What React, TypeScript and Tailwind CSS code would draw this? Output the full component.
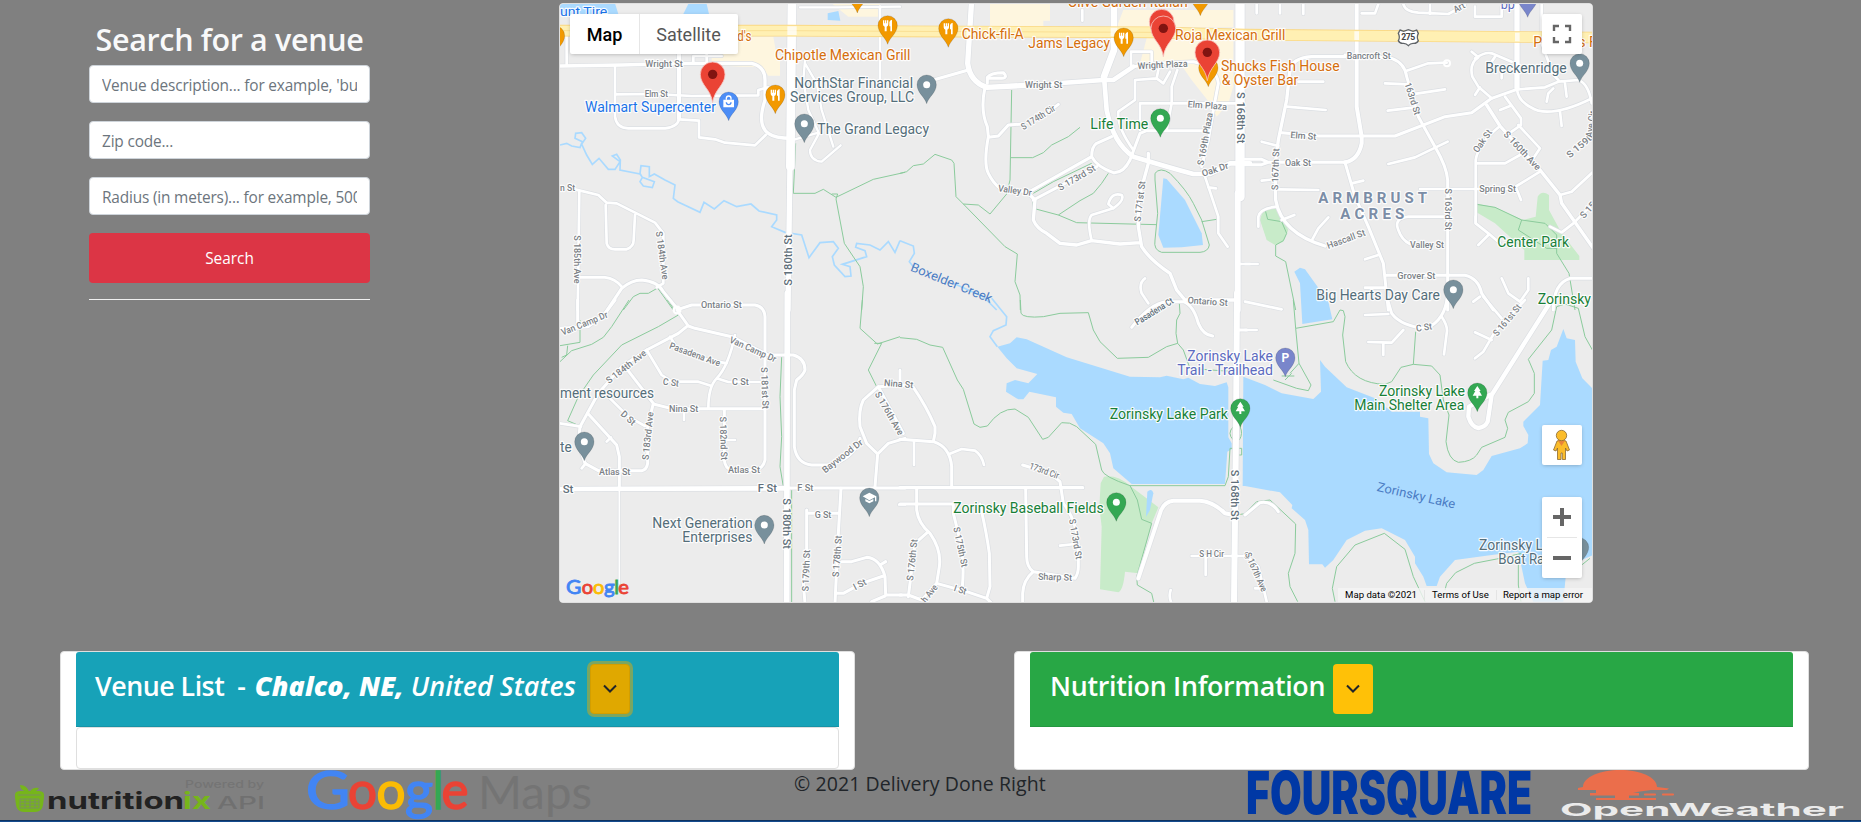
import React from "react";

type Shape = string[];
type Road = [number, string];
type Label = [x: number, y: number, size: number, kind: string, length: number, text: string, rotate?: number];
type Pin = [x: number, y: number, kind: string, glyph?: string];
interface Tile {
  x: number;
  y: number;
  shops?: Shape;
  parks?: Shape;
  water?: Shape;
  creeks?: Shape;
  roads: Road[];
  trails: Shape;
  labels: Label[];
  pins: Pin[];
}

const COLORS: Record<string, string> = {
  road: "#7b8186",
  major: "#5f6f7a",
  food: "#d56e0c",
  place: "#546e7a",
  shop: "#1a73e8",
  park: "#188038",
  area: "#7b8da6",
  trail: "#5c6bc0",
  water: "#4a7cc4",
};
const PIN_COLORS: Record<string, string> = {
  food: "#f29900",
  place: "#78909c",
  shop: "#4c8df6",
  park: "#34a853",
  trail: "#7986cb",
};

const TILES: Tile[] = [
  {
    x: 0,
    y: 0,
    shops: ["M480 110H655L662 150L675 165V227H640L620 200L560 200L470 195V160Z", "M830 10H975V50H880Z"],
    water: ["M15 10H180L190 42H15Z", "M400 12H455L462 42H385Z", "M818 40L850 33L856 62L818 60Z"],
    creeks: [
      "M15 435L35 430L50 438L75 443L82 425L60 415L62 400L80 398L92 415L80 432L95 465L112 493L132 475L160 508L180 508L195 485L172 468L185 463L196 480L195 510L255 522L262 532L255 545L265 558L292 563L298 545L262 532L255 520L258 497L283 500V530L298 522L330 540L360 555L355 595L368 605L435 637L447 607L478 627L507 602L545 620L588 612L612 633L665 645V660L650 680L690 697L740 705L762 773L795 728L835 725L850 745L832 770L838 795L870 830L888 828L885 800L862 793L935 770L930 752L902 742L905 730L945 735L975 750L1000 725L1020 757L1035 722",
    ],
    roads: [
      [10, "M15 198L200 195L370 190H590Q630 200 630 240V300Q605 375 640 400Q660 415 710 415"],
      [8, "M35 110V195M180 200V350Q185 385 220 385H330Q370 380 372 355M180 283L300 282L410 288L610 286V270L640 262"],
      [12, "M372 160V355"],
      [8, "M372 358L432 362V412L480 418L510 428L600 436L632 405M415 185V168H500M455 160V185"],
      [7, "M720 418L790 398M750 180L745 240L760 330L792 400L765 450Q765 482 800 485L857 436M750 190L785 250L800 330L835 440M735 22H850L1035 20"],
      [8, "M975 20V240"],
      [26, "M711 0L706 500"],
      [16, "M705 480L699 930"],
      [8, "M60 568L130 585L155 608L185 610L300 668L325 700V850L305 862M152 615L155 730Q160 748 180 748H215Q236 740 236 720L240 645M73 575L68 930M68 832H150Q180 835 200 860"],
      [9, "M150 940L200 865Q230 840 260 840Q310 845 325 875L370 930"],
    ],
    trails: [
      "M205 930L235 890L255 880H280L308 864L355 930",
      "M722 430L715 580H780L805 568L843 592L955 538L1050 517M830 582H848L843 597L868 730L915 800L925 860L920 930",
    ],
    labels: [
      [15, 48, 40, "shop", 142, "unt Tire"],
      [547, 122, 42, "food", 42, "d's"],
      [660, 181, 42, "food", 406, "Chipotle Mexican Grill"],
      [718, 264, 42, "place", 356, "NorthStar Financial"],
      [705, 307, 42, "place", 372, "Services Group, LLC"],
      [787, 402, 42, "place", 335, "The Grand Legacy"],
      [90, 336, 42, "shop", 393, "Walmart Supercenter"],
      [271, 202, 28, "road", 112, "Wright St"],
      [269, 291, 28, "road", 70, "Elm St"],
      [15, 572, 28, "road", 45, "n St"],
      [68, 778, 28, "road", 145, "S 185th Ave", 90],
      [322, 766, 28, "road", 145, "S 184th Ave", 82],
      [701, 780, 32, "major", 154, "S 180th St", -90],
    ],
    pins: [
      [0, 107, "food"],
      [998, 76, "food", "fork"],
      [661, 284, "food", "fork"],
      [748, 371, "place", "dot"],
      [521, 305, "shop", "bag"],
      [907, -18, "food"],
    ],
  },
  {
    x: 1035,
    y: 0,
    shops: ["M270 10H450V62H430V80H270Z", "M670 30H1000V82H650Z", "M740 115H1000V260L985 310L950 350L930 310L875 240L840 190H720Z"],
    water: ["M790 535L800 537L855 600L880 650L905 700L909 735L845 742L790 743L775 705Z"],
    creeks: ["M0 722L40 738L43 760L28 785L40 800", "M160 850L250 890L290 930"],
    roads: [
      [16, "M215 0L203 190Q210 245 260 262L400 255"],
      [14, "M400 255L610 240L640 240L700 200"],
      [9, "M700 200L760 190L880 185Q950 200 955 250L940 330L925 420L905 500"],
      [20, "M642 0V150L612 230"],
      [14, "M612 230L620 330Q640 430 700 470Q800 500 880 522H930L990 490H1050"],
      [9, "M100 240L205 210M262 250V232Q272 218 310 218Q325 233 305 235H265M255 262Q240 330 262 380L265 410Q250 490 265 520Q280 550 300 565M265 412L295 408L325 375L370 372M420 355L475 313"],
      [9, "M635 410L590 430Q575 440 575 470L385 577M575 470Q590 500 640 518Q670 520 690 480L720 400L740 392H915M400 600L590 500"],
      [10, "M300 565L380 575L405 600L400 660Q410 685 440 700L480 730L530 735L575 722L660 732L720 728M745 460V490L715 600V680L725 740Q750 780 810 820L830 870L855 900H1010"],
      [8, "M575 722Q560 660 575 645L640 625Q675 600 665 585Q635 575 625 612L640 625M655 335L705 300V240L770 235L775 210M655 335Q650 380 700 450M720 390V310H1010M693 195V155H755V185M832 210L815 260V310L800 390M770 235L790 250L810 215M915 530L955 650V700L983 740M925 562L948 565M735 835Q715 850 725 880L745 910M547 30V62"],
      [28, "M1020 0V590"],
      [18, "M1013 580V930"],
      [8, "M1020 792H1050"],
    ],
    trails: [
      "M0 520L20 515L40 497L70 492L105 463L155 480L162 490L168 590L190 612L315 740L352 762L345 845L360 885L361 930",
      "M190 612L235 615L270 642L320 582L330 540L335 270",
      "M332 473H398L430 458L455 435L505 410L540 382",
      "M398 590L400 625L475 645L530 668L770 674M475 645L540 602L580 580L605 550L625 520",
      "M400 580L460 545L575 490",
      "M765 520Q780 500 810 520Q860 570 880 610L905 660L928 735Q925 755 900 757H785Q760 750 765 720L773 640L765 540ZM905 665L950 658",
    ],
    labels: [
      [185, 118, 42, "food", 186, "Chick-fil-A"],
      [385, 145, 42, "food", 245, "Jams Legacy"],
      [503, 20, 42, "food", 360, "Olive Garden Italian"],
      [825, 121, 42, "food", 331, "Roja Mexican Grill"],
      [963, 213, 42, "food", 356, "Shucks Fish House"],
      [965, 256, 42, "food", 230, "& Oyster Bar"],
      [571, 387, 42, "park", 174, "Life Time"],
      [375, 264, 28, "road", 112, "Wright St"],
      [788, 194, 28, "road", 150, "Wright Plaza", -3],
      [414, 352, 28, "road", 115, "S 174th Cir", -32],
      [922, 316, 28, "road", 118, "Elm Plaza", 4],
      [915, 417, 28, "road", 160, "S 169th Plaza", -80],
      [945, 508, 28, "road", 82, "Oak Dr", -18],
      [345, 571, 28, "road", 102, "Valley Dr", 8],
      [530, 533, 28, "road", 125, "S 173rd St", -30],
      [719, 604, 28, "road", 122, "S 171st St", -83],
      [1021, 353, 32, "major", 154, "S 168th St", 90],
      [155, 848, 38, "water", 260, "Boxelder Creek", 22],
      [923, 904, 28, "road", 120, "Ontario St", 4],
    ],
    pins: [
      [145, 85, "food", "fork"],
      [671, 113, "food", "fork"],
      [901, -10, "food"],
      [781, 355, "park", "dot"],
      [925, 203, "food"],
      [80, 254, "place", "dot"],
    ],
  },
  {
    x: 2070,
    y: 0,
    parks: [
      "M690 610L750 622L835 660L872 650L878 590Q890 570 912 585V630L950 700L1003 768V780H838V750L750 670L692 635Z",
      "M55 628L95 618L130 690L115 725L90 735L65 720L45 660Z",
    ],
    water: ["M148 815L165 803L180 808L250 905L262 958L172 972L165 850Z"],
    roads: [
      [12, "M335 0V320L350 410V430Q340 480 300 487"],
      [9, "M300 487H60M0 478H50L70 487L50 494H0"],
      [16, "M816 0V262"],
      [10, "M300 170H200Q140 175 135 210L125 300L100 420L90 500L92 600Q110 700 240 738"],
      [9, "M300 165L440 175Q480 190 485 230L520 350L570 440Q605 500 608 540V930"],
      [8, "M485 212L550 190L605 188M420 250L490 253M500 283L600 268M428 332L510 322M160 245H235M125 320L242 330M430 492L510 472L608 425M50 425L100 438M50 542L85 538M100 568L220 570M525 567H700M320 550L355 542M360 778L400 765M0 792H38M200 722L220 685L250 652M110 660L148 645M40 680V650Q45 625 95 620M605 650H490Q445 655 460 690Q470 720 495 732M360 863H420"],
      [9, "M110 398L220 408H450L600 350L680 338L740 295L816 268M300 487L330 590L370 680L415 790L430 930M425 826H660Q700 835 710 880L745 930M925 930Q925 850 975 835H1040"],
      [8, "M685 905L705 890M770 835L790 880L825 905L850 870V835M692 670V480Q700 430 765 378M692 490H780L825 465M700 567H800L885 515M812 560L828 600M780 290L828 355V375L800 395M820 375L885 445L865 475M765 330L795 318"],
      [10, "M725 315L765 378L885 510L945 585L950 610L1045 745"],
      [8, "M680 155L700 172Q672 190 682 230L700 260L740 295M690 175Q720 155 740 160L800 185M740 185L750 170M770 235V200M690 285L705 262M816 268Q820 310 880 332Q940 345 1040 295M820 268L900 262L940 245L1000 240Q1030 250 1040 310M905 305L910 280L925 265M965 290L960 250M945 335L950 378M890 12V130L925 225L940 240M945 585L980 575L1045 515M915 680L950 697L985 670L1045 610M692 650V670L730 700L765 730M700 735L730 705"],
      [8, "M475 12Q480 35 520 38L610 42L660 15M350 40H390L400 12M690 20V50H770V20M35 12V40M105 12V40M175 12V42M555 12V42"],
    ],
    trails: [
      "M60 628L68 658L110 665L125 700L115 722L92 735V768L122 785L152 930",
      "M695 613L750 622L830 660L900 670L935 705V760L972 820L990 930M830 660L820 690L905 745H935",
      "M95 620L115 665",
    ],
    labels: [
      [305, 178, 28, "road", 132, "Bancroft St"],
      [503, 296, 28, "road", 100, "163rd St", 72],
      [175, 407, 28, "road", 78, "Elm St", 4],
      [120, 497, 28, "road", 78, "Oak St"],
      [91, 508, 28, "road", 125, "S 167th St", -88],
      [712, 423, 28, "road", 76, "Oak St", -55],
      [832, 452, 28, "road", 148, "S 160th Ave", 47],
      [1008, 434, 28, "road", 105, "S 159th", -40],
      [1037, 372, 28, "road", 80, "Ave Cir", -82],
      [703, 576, 28, "road", 110, "Spring St"],
      [610, 628, 28, "road", 125, "S 163rd St", 90],
      [1028, 630, 28, "road", 55, "S 15", -48],
      [303, 717, 28, "road", 120, "Hascall St", -20],
      [495, 744, 28, "road", 102, "Valley St"],
      [457, 836, 28, "road", 114, "Grover St"],
      [220, 610, 45, "area", 326, "ARMBRUST"],
      [286, 656, 45, "area", 192, "ACRES"],
      [721, 220, 42, "place", 244, "Breckenridge"],
      [767, 26, 42, "trail", 42, "bp"],
      [865, 140, 42, "food", 190, "Panera's F"],
      [757, 741, 42, "park", 215, "Center Park"],
      [214, 901, 42, "place", 371, "Big Hearts Day Care"],
      [878, 912, 42, "park", 160, "Zorinsky"],
      [642, 22, 28, "road", 35, "Art", -28],
    ],
    pins: [
      [848, -5, "trail"],
      [1004, 190, "place", "dot"],
      [625, 869, "place", "dot"],
    ],
  },
  {
    x: 0,
    y: 900,
    roads: [
      [9, "M15 85L100 80L150 40L180 0M68 0V85M366 30L400 78L420 85L530 110L640 165H715Q750 175 750 210Q745 225 725 240L718 270V440Q725 490 770 495H830Q900 470 915 415"],
      [9, "M395 80L370 100L275 150L200 200L130 280L75 380L70 430L90 490L130 512H260Q275 510 278 490V380L295 310L210 200"],
      [8, "M345 110L370 150L440 175L515 190M275 150L320 225L350 245H430L470 258M540 105Q520 200 485 235Q460 260 460 325M485 235L520 246H625"],
      [9, "M370 28L410 15H600Q628 20 630 50V480Q625 505 600 510H530Q510 505 508 480V330M295 312L350 326H630M98 340L185 435L193 470V560"],
      [8, "M0 368L78 380M165 295L220 350L270 378M387 340V360M505 420H540M155 425L168 412M80 505L92 490"],
      [5, "M193 570V850"],
      [14, "M0 567L690 565"],
      [9, "M690 564H1050"],
      [9, "M755 630V770L745 850L750 910M755 640H850M858 565L850 700L840 910M860 785H890L935 772Q975 775 990 830L992 885H1040M975 795L992 785M845 880H865L920 850L985 828M950 905L990 888"],
      [9, "M1050 255L970 260L925 300Q910 330 915 380L935 430L968 462L1000 430L1050 415M968 462L960 560M970 260L1045 400"],
      [7, "M1035 210V250M1032 614H1050"],
      [17, "M697 -20L695 910"],
    ],
    trails: [
      "M222 0L170 80L145 112L110 133L50 152L15 185M75 60V127L15 137M38 137L35 165L20 172",
      "M337 0L370 45L310 80L200 135L115 225L70 290L38 362L75 378",
      "M680 170L675 290L680 410L675 500L685 560L710 565V910",
      "M922 0L915 85L967 132L1035 110M958 130H980L940 210L965 260",
    ],
    labels: [
      [438, 24, 28, "road", 122, "Ontario St"],
      [88, 70, 28, "road", 148, "Van Camp Dr", -22],
      [213, 200, 28, "road", 145, "S 184th Ave", -38],
      [420, 163, 28, "road", 160, "Pasadena Ave", 20],
      [594, 148, 28, "road", 150, "Van Camp Dr", 24],
      [348, 247, 28, "road", 48, "C St", 8],
      [531, 255, 28, "road", 50, "C St"],
      [630, 264, 28, "road", 125, "S 181st St", 88],
      [342, 336, 28, "road", 88, "Nina St"],
      [220, 354, 28, "road", 50, "D St", 42],
      [278, 408, 28, "road", 145, "S 183rd Ave", -84],
      [506, 415, 28, "road", 130, "S 182nd St", 88],
      [132, 524, 28, "road", 94, "Atlas St"],
      [519, 519, 28, "road", 96, "Atlas St"],
      [862, 468, 28, "road", 145, "Baywood Dr", -38],
      [1003, 340, 28, "road", 145, "S 176th Ave", 60],
      [1031, 251, 28, "road", 88, "Nina St", 5],
      [23, 578, 32, "major", 32, "St"],
      [608, 577, 32, "major", 58, "F St"],
      [727, 573, 28, "road", 48, "F St"],
      [694, 671, 32, "major", 152, "S 180th St", 90],
      [779, 654, 28, "road", 50, "G St"],
      [753, 812, 28, "road", 125, "S 179th St", -88],
      [846, 769, 28, "road", 125, "S 178th St", -86],
      [914, 853, 28, "road", 40, "I St", -28],
      [15, 294, 42, "place", 282, "ment resources"],
      [15, 455, 42, "place", 35, "te"],
      [292, 684, 42, "place", 301, "Next Generation"],
      [382, 727, 42, "place", 210, "Enterprises"],
    ],
    pins: [
      [88, 425, "place", "dot"],
      [628, 675, "place", "dot"],
      [943, 593, "place", "school"],
    ],
  },
  {
    x: 1035,
    y: 900,
    parks: ["M612 530Q650 523 690 557L775 622L755 670L715 820L675 815Q670 870 655 877L600 868L605 680L598 620L602 550Z"],
    water: [
      "M292 140L330 130L350 112L380 118L500 172L690 230L780 232L800 227L850 238L865 233L900 252L945 258L980 247L985 262V412L995 430V448L982 455L975 552H695L640 505L630 460L610 430L540 385L515 342L490 338L468 320V292L388 275L370 298L355 298L318 275L320 250L345 240L385 250L412 222L350 205L320 175Z",
      "M742 575Q755 563 760 580L750 630L738 650Z",
    ],
    creeks: ["M275 -5L320 50L318 75L280 92L270 110L292 140"],
    roads: [
      [9, "M0 255L40 262Q80 320 105 380V400L100 425M0 418L100 425Q150 440 155 500V560"],
      [8, "M148 462L185 447L225 452Q245 465 252 495M42 425V495M480 737L525 732M875 768H1050M917 770V825M812 870Q805 890 815 910M0 210V250"],
      [10, "M0 563H548"],
      [9, "M50 563V630Q55 670 90 700Q125 750 118 800L110 850L200 875L260 895L275 910M0 612H160V640L175 700Q195 780 187 860M85 695L45 730L25 890M0 885H25L65 900L110 850M240 612Q260 700 268 760L270 860L260 895"],
      [9, "M377 565L380 770Q380 800 400 815L525 835Q535 820 535 800V740Q530 660 490 610L480 545L450 520L368 495M400 815Q370 840 368 880V910"],
      [12, "M715 835L780 640Q790 605 820 602H900Q940 605 975 640L1000 645"],
      [9, "M695 82Q750 10 800 5H850Q880 15 895 70Q910 105 938 108M1015 90H1040"],
      [18, "M1011 -20L1008 400L1002 910"],
    ],
    trails: [
      "M0 113L50 118L90 135L128 142L172 240L190 268L222 372L240 382L262 378Q300 325 345 327L385 352L428 418L445 412L485 368Q510 365 530 380L587 433L605 510Q610 530 690 557H975L985 530L990 445H1025V465H1010",
      "M361 0L363 40Q370 55 430 50L480 40L565 38L580 90L600 125L652 175L745 172L800 140L833 130M838 10L840 40L830 60L828 100L833 130L850 150L870 205L960 212L1020 215",
      "M690 557L712 600L725 658L755 670L710 830L712 855L755 880L762 910M1000 380Q980 400 1000 420M1020 380Q1030 400 1018 420M1005 645L1045 640",
    ],
    labels: [
      [762, 34, 28, "major", 130, "Pasadena Ct", -32],
      [433, 512, 28, "road", 92, "173rd Cir", 20],
      [1004, 585, 32, "major", 152, "S 168th St", 90],
      [36, 780, 28, "road", 125, "S 176th St", -84],
      [182, 741, 28, "road", 122, "S 175th St", 78],
      [527, 717, 28, "road", 122, "S 173rd St", 80],
      [465, 831, 28, "road", 102, "Sharp St", 2],
      [181, 869, 28, "road", 38, "I St", 18],
      [88, 880, 28, "road", 60, "h Ave", -52],
      [898, 772, 28, "road", 74, "S H Cir"],
      [1033, 776, 28, "road", 16, "S"],
      [629, 357, 42, "park", 355, "Zorinsky Lake Park"],
      [160, 640, 42, "park", 451, "Zorinsky Baseball Fields"],
      [862, 183, 42, "trail", 257, "Zorinsky Lake"],
      [832, 226, 42, "trail", 287, "Trail - Trailhead"],
    ],
    pins: [
      [1021, 325, "park", "tree"],
      [649, 607, "park", "dot"],
    ],
  },
  {
    x: 2070,
    y: 900,
    water: [
      "M-5 230L60 255L110 280L205 297L228 275L225 180L240 200L305 262L390 295L440 335H525V350L550 355L552 462L565 490L605 517L695 525L715 510L740 468L825 445L848 430L850 405L835 378V365L885 315L893 182L910 180L918 150L935 140L955 87L965 115L990 120L992 185L1012 235L1045 268V765L965 800L955 905H865L840 850L820 755L740 765L630 780L585 830L575 858L545 858L535 830L510 790V770L480 720L440 700L410 685L360 692L305 720L265 780L240 803L232 793H192L190 690L180 660L140 625L142 615L105 577L0 558H-7Z",
    ],
    roads: [
      [8, "M0 5L110 28M0 90H35M370 126L440 128L475 90M360 45L430 42M415 130V165M590 50Q610 80 605 100L597 163M690 175L715 155L750 95L840 0M690 97L740 120M715 -10L770 55"],
      [9, "M607 -10Q600 60 545 85Q470 80 440 40L425 -10M0 645L45 608Q80 602 100 635"],
      [13, "M920 0L740 285L728 365Q720 382 700 384Q680 382 670 350L672 320L735 285"],
      [8, "M0 765L40 800L65 905M30 865H45"],
    ],
    trails: [
      "M145 0L152 85L265 65L285 30L295 32L300 50L293 105L302 185Q330 250 420 253L440 245L468 202L505 193L560 198L585 225L595 300L612 345L603 425Q610 480 640 487Q680 485 695 465L710 442L780 412L788 385L780 360L790 337L850 305L868 280V220L850 178L920 90L935 20L960 12L1000 25L1020 110L1045 155",
      "M152 85L162 190L198 255L190 272L155 265L85 240M512 95L505 193M162 190L135 220M110 228H148M120 240L140 220",
      "M0 640L35 605L75 600L152 672L150 760L130 820L135 860L158 905",
      "M270 905L262 865L275 800L330 735L418 700L480 748L505 830L540 905M600 870L605 850L632 818L688 790L755 777L830 760M820 780V855L828 905M1010 795L1035 775",
    ],
    labels: [
      [537, 82, 28, "road", 48, "C St", -8],
      [786, 60, 28, "road", 115, "S 161st St", -50],
      [34, 816, 28, "road", 125, "S 167th Ave", 66],
      [402, 289, 42, "park", 258, "Zorinsky Lake"],
      [328, 331, 42, "park", 330, "Main Shelter Area"],
      [514, 586, 38, "water", 240, "Zorinsky Lake", 13],
      [702, 751, 42, "place", 258, "Zorinsky Lake"],
      [760, 793, 42, "place", 195, "Boat Ramp"],
    ],
    pins: [
      [121, 173, "trail", "parking"],
      [697, 278, "park", "tree"],
      [1002, 742, "place"],
    ],
  },
];

const RED_PINS = [
  [473, 223],
  [1820, 65],
  [1825, 85],
  [1957, 157],
];

function MapPin({ x, y, kind, glyph }: { x: number; y: number; kind: string; glyph?: string }) {
  const color = PIN_COLORS[kind];
  return (
    <g transform={`translate(${x} ${y})`}>
      <path d="M0 57C-6 36 -29 24 -29 0A29 29 0 1 1 29 0C29 24 6 36 0 57Z" fill={color} stroke="#00000033" strokeWidth="2" />
      {glyph === "dot" && <circle r="10.5" fill="#fff" />}
      {glyph === "fork" && (
        <path d="M-14 -15H-10V-6H-8V-15H-4V-6H-2V-15H2V-3Q2 2 -3 4V18H-9V4Q-14 2 -14 -3ZM5 -10Q7 -16 13 -17V18H8V3H5Z" fill="#fff" />
      )}
      {glyph === "bag" && (
        <>
          <path d="M-16 -6H16V17H-16Z" fill="#fff" />
          <path d="M-7 -6V-10A7 7 0 0 1 7 -10V-6" fill="none" stroke="#fff" strokeWidth="4" />
          <path d="M-7 2A7 7 0 0 0 7 2" fill="none" stroke={color} strokeWidth="4" />
        </>
      )}
      {glyph === "tree" && <path d="M0 -20L10 -5H6L14 9H3V17H-3V9H-14L-6 -5H-10Z" fill="#fff" />}
      {glyph === "school" && <path d="M0 -15L21 -4V11H17V-1L0 8L-20 -4ZM-12 4L0 10L12 4V11L0 17L-12 11Z" fill="#fff" />}
      {glyph === "parking" && (
        <text y="13" textAnchor="middle" fontSize="36" fontWeight="700" fill="#fff">
          P
        </text>
      )}
    </g>
  );
}

function MapLabel({ label }: { label: Label }) {
  const [x, y, size, kind, length, text, rotate] = label;
  const turned = rotate !== undefined;
  return (
    <text
      x={turned ? 0 : x}
      y={turned ? size * 0.35 : y}
      transform={turned ? `translate(${x} ${y}) rotate(${rotate})` : undefined}
      textAnchor={turned ? "middle" : "start"}
      fontSize={size}
      fontWeight={kind === "area" ? 700 : kind === "road" || kind === "major" ? 500 : 400}
      fill={COLORS[kind]}
      stroke={kind === "water" ? "none" : "#ffffffe0"}
      strokeWidth="7"
      strokeLinejoin="round"
      paintOrder="stroke"
      textLength={length}
      lengthAdjust={kind === "area" ? "spacing" : "spacingAndGlyphs"}
    >
      {text}
    </text>
  );
}

const GOOGLE: [string, string][] = [
  ["G", "#4285f4"],
  ["o", "#ea4335"],
  ["o", "#fbbc05"],
  ["g", "#4285f4"],
  ["l", "#34a853"],
  ["e", "#ea4335"],
];

function Tiles({ render }: { render: (tile: Tile) => React.ReactNode }) {
  return (
    <>
      {TILES.map((tile, i) => (
        <g key={i} transform={`translate(${tile.x} ${tile.y})`}>
          {render(tile)}
        </g>
      ))}
    </>
  );
}

function StreetMap() {
  const smallX = [33, 80, 114, 147, 178, 190];
  const smallWidths = [46, 34, 34, 32, 14, 32];
  return (
    <svg viewBox="15 12 3096 1794" className="block h-[598px] w-[1032px] font-['Roboto',sans-serif]">
      <rect x="0" y="0" width="3200" height="1900" fill="#ececec" />
      <Tiles render={(t) => t.shops?.map((d) => <path key={d} d={d} fill="#fef6df" />)} />
      <Tiles render={(t) => t.parks?.map((d) => <path key={d} d={d} fill="#c8ebc9" />)} />
      <Tiles render={(t) => t.water?.map((d) => <path key={d} d={d} fill="#aadaff" />)} />
      <Tiles render={(t) => t.creeks?.map((d) => <path key={d} d={d} fill="none" stroke="#aadaff" strokeWidth="5" />)} />
      <Tiles render={(t) => t.trails.map((d) => <path key={d} d={d} fill="none" stroke="#8bcb9c" strokeWidth="3" />)} />
      <g fill="none" stroke="#dcdfe3" strokeLinecap="round" strokeLinejoin="round">
        <Tiles render={(t) => t.roads.map(([w, d]) => <path key={d} d={d} strokeWidth={w + 4} />)} />
      </g>
      <g fill="none" stroke="#fff" strokeLinecap="round" strokeLinejoin="round">
        <Tiles render={(t) => t.roads.map(([w, d]) => <path key={d} d={d} strokeWidth={w} />)} />
        <circle cx="366" cy="930" r="10" strokeWidth="7" />
        <circle cx="2676" cy="190" r="9" strokeWidth="6" />
      </g>
      <g fill="none">
        <path d="M0 92H700L1035 94L1800 97L2070 104L2900 111L3200 113" stroke="#fad884" strokeWidth="35" />
        <path d="M0 92H700L1035 94L1800 97L2070 104L2900 111L3200 113" stroke="#fff0b3" strokeWidth="30" />
        <path d="M0 92H700L1035 94L1800 97" stroke="#fadf94" strokeWidth="3" />
        <path d="M697 92H725M1234 95H1258M1667 96H1687M2043 104H2066M2398 107H2412M2880 111H2894" stroke="#fff" strokeWidth="26" opacity=".75" />
      </g>
      <Tiles render={(t) => t.labels.map((l, i) => <MapLabel key={i} label={l} />)} />
      <g transform="translate(2560 112)">
        <path d="M-25 -22L-14 -18L0 -23L14 -18L25 -22L30 -12Q24 0 30 10Q25 20 14 18Q6 18 0 25Q-6 18 -14 18Q-25 20 -30 10Q-24 0 -30 -12Z" fill="#fff" stroke="#5f6368" strokeWidth="4" />
        <text y="9" textAnchor="middle" fontSize="26" fontWeight="700" fill="#444" textLength="42">
          275
        </text>
      </g>
      <Tiles render={(t) => t.pins.map(([x, y, kind, glyph], i) => <MapPin key={i} x={x} y={y} kind={kind} glyph={glyph} />)} />
      {RED_PINS.map(([x, y]) => (
        <g key={x} transform={`translate(${x} ${y})`}>
          <path d="M0 85C-5 45 -37 32 -37 0A37 37 0 1 1 37 0C37 32 5 45 0 85Z" fill="#ea4335" stroke="#f6c4bf" strokeWidth="2.5" />
          <circle r="14" fill="#811411" />
        </g>
      ))}
      <g fontSize="58" className="font-['Lato',sans-serif]">
        {GOOGLE.map(([char, fill], i) => (
          <text
            key={i}
            x={smallX[i]}
            y="1783"
            fill={fill}
            stroke={fill}
            strokeWidth="2.5"
            fontWeight="400"
            textLength={smallWidths[i]}
            lengthAdjust="spacingAndGlyphs"
          >
            {char}
          </text>
        ))}
      </g>
    </svg>
  );
}

function MapCard() {
  const control = "absolute left-[982px] w-10 rounded-[2px] bg-white shadow-[0_1px_4px_-1px_rgba(0,0,0,0.3)]";
  return (
    <div className="relative mt-[3px] h-[600px] w-[1034px] overflow-hidden rounded border border-[#dfdfdf] bg-white">
      <StreetMap />
      <div className="absolute left-[10px] top-[10px] flex h-10 w-[168px] items-center rounded-[2px] bg-white font-['Roboto',sans-serif] text-[18px] shadow-[0_1px_4px_-1px_rgba(0,0,0,0.3)]">
        <span className="w-[69px] text-center font-medium text-black">Map</span>
        <span className="flex h-10 flex-1 items-center justify-center border-l border-[#e6e6e6] pr-px text-[#565656]">Satellite</span>
      </div>
      <div className={`${control} top-[10px] h-10`}>
        <svg viewBox="0 0 40 40" className="size-10" fill="none" stroke="#666" strokeWidth="2.4">
          <path d="M12 17V12H17M23 12H28V17M28 23V28H23M17 28H12V23" />
        </svg>
      </div>
      <div className={`${control} top-[421px] h-10`}>
        <svg viewBox="0 0 40 40" className="size-10" stroke="#8a6a33" strokeWidth=".8">
          <path d="M15 16Q19.500 14 24 16L27.500 25L25 26L23.500 23V34.500H20.300V28H19V34.500H15.500V23L14 26L11.500 25Z" fill="#fbbc2a" />
          <path d="M16 15.500H23L19.500 21Z" fill="#e8833a" stroke="none" />
          <circle cx="19.500" cy="10.500" r="5.200" fill="#fbbc2a" />
        </svg>
      </div>
      <div className={`${control} top-[493px] h-[81px]`}>
        <svg viewBox="0 0 40 81" className="h-[81px] w-10" fill="none" stroke="#666" strokeWidth="4">
          <path d="M11 20H29M20 11V29M11 61H29" />
          <path d="M5 40.500H35" stroke="#e6e6e6" strokeWidth="1" />
        </svg>
      </div>
      <div className="absolute bottom-0 right-0 flex h-[14px] items-center bg-[#f5f5f5]/75 font-['Roboto',sans-serif] text-[9.600px] leading-none text-black">
        <span className="w-[86px] text-center">Map data ©2021</span>
        <span className="w-[72px] border-l border-[#e4e4e4] text-center">Terms of Use</span>
        <span className="w-[96px] border-l border-[#e4e4e4] pr-[3px] text-center">Report a map error</span>
      </div>
    </div>
  );
}

function Field({ placeholder }: { placeholder: string }) {
  return (
    <input
      type="text"
      placeholder={placeholder}
      className="mb-[18px] block h-[38px] w-full rounded border border-[#ced4da] bg-white px-3 pt-[2px] text-[15.400px] tracking-[-0.170px] text-[#495057] placeholder:text-[#6c757d]"
    />
  );
}

function Chevron() {
  return (
    <svg viewBox="0 0 14 10" className="h-[10px] w-[14px]" fill="none" stroke="#212529" strokeWidth="2">
      <path d="M1 1.500L7 7.500L13 1.500" />
    </svg>
  );
}

function Logos() {
  const bigX = [306, 348, 376.5, 405, 433, 441.5];
  const widths = [44, 29, 29, 28, 10, 27];
  return (
    <footer className="flex h-[50px] items-start pl-[14px]">
      <svg viewBox="14 770 251 50" className="h-[50px] w-[251px] font-['Inter',sans-serif]">
        <path d="M15 797Q14 791 20 791H39Q45 791 44 797L43 805Q42 812 35 812H24Q17 812 16 805Z" fill="#76b51b" />
        <path d="M18 795H41M20 799H39V808H20ZM25 799V808M30 799V808M35 799V808M20 802H39M20 805H39" fill="none" stroke="#808080" strokeWidth=".7" />
        <path d="M29 792Q20 791 20 785Q27 785 29 792ZM30 792Q32 787 39 788Q36 793 30 792Z" fill="#76b51b" />
        <text x="47" y="809" fontSize="23.500" fontWeight="700" fill="#222" textLength="137" lengthAdjust="spacingAndGlyphs">nutrition</text>
        <text x="183" y="809" fontSize="23.500" fontWeight="700" fill="#76b51b" textLength="28" lengthAdjust="spacingAndGlyphs">ix</text>
        <text x="217" y="809" fontSize="17" fontWeight="500" fill="#707070" textLength="48" lengthAdjust="spacingAndGlyphs">API</text>
        <text x="185" y="788" fontSize="11" fontWeight="500" fill="#747474" textLength="79" lengthAdjust="spacingAndGlyphs">Powered by</text>
      </svg>
      <svg viewBox="306 770 286 50" className="ml-[41px] h-[50px] w-[286px] font-['Lato',sans-serif]">
        {GOOGLE.map(([char, fill], i) => (
          <text
            key={i}
            x={bigX[i]}
            y="808.500"
            fontSize="53"
            stroke={fill}
            strokeWidth="1.600"
            fill={fill}
            textLength={widths[i]}
            lengthAdjust="spacingAndGlyphs"
          >
            {char}
          </text>
        ))}
        <text x="478" y="809" fontSize="46" fill="#747474" textLength="114" lengthAdjust="spacingAndGlyphs">Maps</text>
      </svg>
      <p className="ml-[202px] w-[270px] pt-[2px] text-[19.500px] font-medium leading-[24px] tracking-[0.080px] whitespace-nowrap text-[#212529]">© 2021 Delivery Done Right</p>
      <svg viewBox="1246 770 287 50" className="ml-[182px] h-[50px] w-[287px] font-['Inter',sans-serif]">
        <text x="1246" y="813.500" fontSize="59" fontWeight="900" fill="#0038a5" textLength="286" lengthAdjust="spacingAndGlyphs">FOURSQUARE</text>
      </svg>
      <svg viewBox="1561 770 283 50" className="ml-[28px] h-[50px] w-[283px] font-['Inter',sans-serif]">
        <path d="M1583 787C1583 777 1600 770 1620 770S1657 777 1657 787L1669 788.500L1667 790H1651L1633 792.500L1639 793V795.500H1629V798H1656V800H1596V798H1615V795.500H1590V793H1596V790H1578V788Z" fill="#eb6e4b" />
        <path d="M1645 794.500H1655M1663 794.500H1673" stroke="#eb6e4b" strokeWidth="2.200" strokeLinecap="round" />
        <text x="1560" y="816" fontSize="18" fontWeight="700" fill="#ebebeb" textLength="284" lengthAdjust="spacingAndGlyphs">OpenWeather</text>
      </svg>
    </footer>
  );
}

export default function App() {
  return (
    <div className="flex h-[822px] w-[1861px] flex-col overflow-hidden bg-[#808080] font-['Open_Sans','Noto_Sans',sans-serif]">
      <main className="flex h-[651px] shrink-0 items-start pl-[89px]">
        <form className="mr-[189px] w-[281px] pt-[21px]">
          <h2 className="h-[44px] text-center text-[30.500px] font-semibold leading-[37px] tracking-[-0.350px] whitespace-nowrap text-[#f8f9fa]">Search for a venue</h2>
          <Field placeholder="Venue description... for example, 'burgers'" />
          <Field placeholder="Zip code..." />
          <Field placeholder="Radius (in meters)... for example, 5000" />
          <button type="button" className="block h-[50px] w-full rounded bg-[#dc3545] pt-[2px] text-[15.400px] text-white">Search</button>
          <hr className="mt-4 border-[#f0f0f0]" />
        </form>
        <MapCard />
      </main>
      <section className="flex h-[119px] shrink-0 gap-[159px] pl-[60px]">
        <div className="w-[795px] rounded border border-[#dfdfdf] bg-white px-[15px]">
          <div className="flex h-[75px] items-center rounded-t-[3px] border-b border-[#1792a6] bg-[#17a2b8] pl-[19px] text-[26.800px] text-white">
            <h3 className="w-[495px] pb-[5px] font-semibold tracking-[-0.500px] whitespace-nowrap">
              Venue List&nbsp; - <em className="ml-[3px] tracking-[0.100px]"><b>Chalco, NE,</b> United States</em>
            </h3>
            <button type="button" className="flex h-[50px] w-10 items-center justify-center rounded border border-[#d39e00] bg-[#e0a800] shadow-[0_0_0_3px_rgba(222,170,12,0.5)]"><Chevron /></button>
          </div>
          <div className="h-[42px] rounded border border-[#dfdfdf]" />
        </div>
        <div className="w-[795px] rounded border border-[#dfdfdf] bg-white px-[15px]">
          <div className="flex h-[75px] items-center rounded-t-[3px] border-b border-[#249740] bg-[#28a745] pl-5 text-[26.800px] text-white">
            <h3 className="w-[283px] pb-[5px] font-semibold tracking-[-0.300px] whitespace-nowrap">Nutrition Information</h3>
            <button type="button" className="flex h-[50px] w-10 items-center justify-center rounded bg-[#ffc107]"><Chevron /></button>
          </div>
        </div>
      </section>
      <Logos />
      <div className="h-[2px] border-t border-[#0c3261] bg-[#144b8d]" />
    </div>
  );
}
